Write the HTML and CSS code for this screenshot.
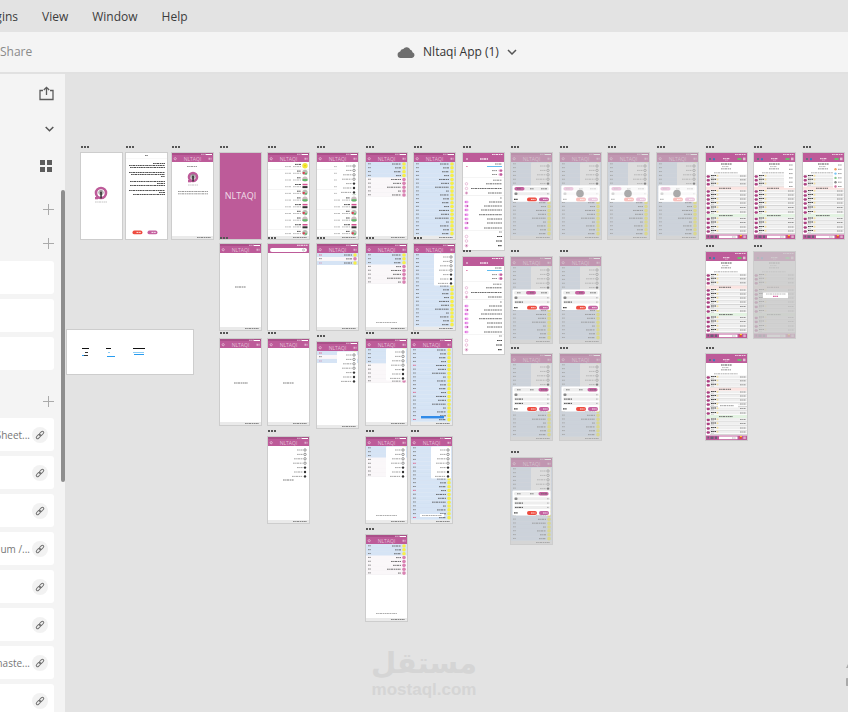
FILE: index.html
```html
<!DOCTYPE html>
<html lang="en">
<head>
    <meta charset="UTF-8">
    <title>Nltaqi App (1)</title>
    <link rel="stylesheet" href="styles.css">
</head>
<body>
<nav class="menubar">
    <button class="cut">Plugins</button>
    <button>View</button>
    <button>Window</button>
    <button>Help</button>
</nav>
<header class="toolbar">
    <a class="share" href="#">Share</a>
    <button class="doc">
        <svg width="18" height="12" viewBox="0 0 18 12"><path d="M3.500 12a3.300 3.300 0 0 1-.3-6.500A3 3 0 0 1 6.300 3 4 4 0 0 1 13.300 3.800 3 3 0 0 1 15.500 6.200 3 3 0 0 1 15 12z" fill="#6e6e6e"/></svg>
        <span>Nltaqi App (1)</span>
        <svg width="10" height="6" viewBox="0 0 10 6"><path d="M1 1l4 4 4-4" fill="none" stroke="#555" stroke-width="1.500"/></svg>
    </button>
</header>
<div class="work">
    <aside class="side">
        <div class="row export"><button aria-label="Export"><svg width="15" height="15" viewBox="0 0 15 15"><path d="M4 4.500H1v9h13v-9h-3M7.500 9V1.500M4.800 4l2.700-2.700L10.200 4" fill="none" stroke="#5c5c5c" stroke-width="1.300"/></svg></button></div>
        <div class="row fold"><button aria-label="Collapse"><svg width="9" height="6" viewBox="0 0 9 6"><path d="M.7 1l3.800 3.800L8.300 1" fill="none" stroke="#555" stroke-width="1.500"/></svg></button></div>
        <div class="row view"><button aria-label="Grid view"><svg width="12" height="12" viewBox="0 0 12 12"><path d="M0 0h5v5H0zM7 0h5v5H7zM0 7h5v5H0zM7 7h5v5H7z" fill="#5c5c5c"/></svg></button></div>
        <div class="row colors"><button class="add" aria-label="Add color"></button></div>
        <div class="row styles"><button class="add" aria-label="Add character style"></button></div>
        <div class="cards">
            <div class="card"></div>
            <div class="card"></div>
            <div class="card"></div>
        </div>
        <div class="row parts"><button class="add" aria-label="Add component"></button></div>
        <div class="cards" id="parts"></div>
        <div class="scroll"></div>
    </aside>
    <main class="canvas" id="canvas">
        <svg class="sheet" width="126" height="44" viewBox="0 0 126 44">
            <path d="M15 18.500h7M39 18.500h5M66 18.500h12" stroke="#111"/>
            <path d="M18 22.500h3M17 25.500h1M18 25.500h3" stroke="#333"/>
            <path d="M41 22.500h2M66 22.500h11" stroke="#8ccdf5"/>
            <path d="M15 25.500h2M40 26.500h8M67 24.500h10" stroke="#289cf0"/>
        </svg>
        <div class="mark">
            <span lang="ar">مستقل</span>
            <b>mostaql.com</b>
        </div>
        <svg class="edge" width="2" height="26" viewBox="0 0 2 26"><path d="M0 6l2-4v4zM2 16a4 4 0 0 0 0 8z" fill="#aaa"/></svg>
    </main>
</div>
<script src="boards.js"></script>
</body>
</html>
```
FILE: styles.css
```css
*{ box-sizing:border-box; }
html,body{ height:100%; }
body{ margin:0; display:flex; flex-direction:column; overflow:hidden; background:#e3e3e3; color:#3c3c3c; font:12px/16px "Open Sans","Noto Sans",sans-serif; }
button{ margin:0; padding:0; border:0; background:none; color:inherit; font:inherit; }
svg{ display:block; }

.menubar{ flex:none; height:32px; padding-top:2px; display:flex; align-items:center; gap:24px; }
.menubar .cut{ width:18px; display:flex; justify-content:flex-end; overflow:hidden; }
.toolbar{ flex:none; height:42px; display:grid; grid-template-columns:1fr auto 1fr; align-items:center; background:#f4f4f4; border-bottom:2px solid #e1e1e1; }
.share{ color:#8a8a8a; text-decoration:none; }
.doc{ grid-column:2; display:flex; align-items:center; gap:8px; margin-left:66px; color:#333; }

.work{ flex:1; min-height:0; display:flex; }
.side{ flex:none; width:65px; position:relative; overflow:hidden; background:#f4f4f4; }
.row{ display:flex; align-items:center; justify-content:flex-end; padding-right:11px; }
.export{ height:38px; }
.fold{ height:34px; }
.view{ height:40px; padding-right:13px; }
.colors{ height:46px; }
.styles{ height:22px; margin-bottom:7px; }
.parts{ height:34px; margin-top:14px; }
.add{ width:11px; height:11px; background:linear-gradient(#aaa,#aaa) center/11px 1px no-repeat,linear-gradient(#aaa,#aaa) center/1px 11px no-repeat; }
.cards{ display:flex; flex-direction:column; gap:5px; width:54px; }
.card{ height:33px; flex:none; display:flex; align-items:center; justify-content:flex-end; gap:2px; padding-right:6px; background:#fff; border-radius:0 3px 3px 0; color:#777; font-size:10px; white-space:nowrap; overflow:hidden; }
.link{ flex:none; width:16px; height:16px; border-radius:50%; background:#f2f2f2; display:flex; align-items:center; justify-content:center; }
.scroll{ position:absolute; right:0; top:116px; width:4px; height:292px; border-radius:2px; background:#8e8e8e; }

.canvas{ flex:1; position:relative; overflow:hidden; background:#e3e3e3; }
.board{ position:absolute; width:41px; }
.board svg{ box-shadow:0 0 0 1px #cdcdcd; background:#fff; }
.board:before{ content:""; position:absolute; left:0; top:-7px; width:8px; height:2px; background:repeating-linear-gradient(90deg,#555 0 2px,transparent 2px 3px); }
.board text{ font-family:"Open Sans","Noto Sans",sans-serif; fill:#fff; text-anchor:middle; }
.sheet{ position:absolute; left:2px; top:256px; background:#fff; box-shadow:0 0 0 1px #cdcdcd; }
.mark{ position:absolute; left:308px; top:572px; width:102px; display:flex; flex-direction:column; align-items:center; color:#d5d5d5; white-space:nowrap; }
.mark span{ font:bold 29px/34px "DejaVu Sans",sans-serif; }
.mark b{ font:bold 17px/20px "Liberation Sans",sans-serif; }
.edge{ position:absolute; right:0; top:588px; }
```
FILE: boards.js
```javascript
var PINK = '#bd5b99', BLUE = '#d6e4f5';

function rect(x, y, w, h, fill, r) {
    return '<rect x="' + x + '" y="' + y + '" width="' + w + '" height="' + h + '" fill="' + fill + '" rx="' + (r || 0) + '"/>';
}
function dot(x, y, r, fill, more) {
    return '<circle cx="' + x + '" cy="' + y + '" r="' + r + '" fill="' + fill + '" ' + (more || '') + '/>';
}
// a line of copy at overview scale
function copy(x1, x2, y, color, w) {
    return '<path d="M' + x1 + ' ' + y + 'H' + x2 + '" stroke="' + (color || '#888') + '" stroke-width="' + (w || 1) + '" stroke-opacity=".85" stroke-dasharray="1.700 .5 1.200 .4 2.300 .6"/>';
}
function ring(x, y, r, color) {
    return dot(x, y, r, 'none', 'stroke="' + color + '" stroke-width=".6"');
}
function title(x, y, size, opacity) {
    return '<text x="' + x + '" y="' + y + '" font-size="' + size + '" fill-opacity="' + opacity + '">NLTAQI</text>';
}

function header() {
    return rect(0, 0, 41, 9, PINK) + rect(0, 0, 41, 2, '#aa5089') + copy(29, 34, 1.3, '#e8cadd') + rect(34, 1, 6, 1, '#fff') +
        ring(3.2, 5.7, 1.1, '#f2dcea') + copy(36.500, 39.500, 5.7, '#e5bfd7', 2) + title(20.500, 7.800, 5, .6);
}
function footer() {
    return rect(0, 83, 41, 3, '#eaeaea') + copy(25, 39, 84.5, '#777');
}
function logo(x, y, r) {
    return dot(x, y, r, '#fff', 'stroke="' + PINK + '" stroke-width="2.600"') + rect(x - r - 1, y + r - 1, 3, 2.3, PINK) +
        ring(x, y - .5, 2.2, '#555') + dot(x, y - .5, 1.300, '#444') + rect(x - .7, y, 1.500, r + .5, '#333') +
        copy(x - r - 1, x + r + 1, y + r + 4, '#aaa', .8);
}
function chats(n, blue, from) {
    var s = '', y, i, b;
    for (i = 0; i < n; i++) {
        y = 9 + i * 3.87;
        b = i < blue;
        s += rect(0, y, 41, 3.87, b ? BLUE : '#faf7f9') + rect(0, y + 3.6, 41, .3, b ? '#c9d8ea' : '#ededed');
        s += dot(38, y + 2, 1.8, b ? '#f6ee4a' : '#d982b2');
        s += copy([26, 29, 28, 30, 25, 27, 21, 32][i % 8], 35, y + 2, '#555');
        s += copy(2, 5, y + 1.8, from && i % 7 == from ? '#e0507a' : '#777');
    }
    return s;
}
function menu() {
    var s = rect(20, 9.500, 20, 32, '#fff', 1), left = [29, 29, 26, 25, 29, 26, 24];
    for (var i = 0; i < 7; i++) {
        s += copy(left[i], 34.5, 13 + i * 4.4, '#888', .9);
        s += i < 4 ? ring(37, 13 + i * 4.4, 1.2, '#555') : dot(37, 13 + i * 4.4, 1.2, '#333');
    }
    return s;
}
function contacts() {
    var s = '', y, flags = 'yrgkrgkrgkr', f;
    for (var i = 0; i < 11; i++) {
        y = 12.700 + i * 6.7;
        f = flags[i];
        if (f == 'y') s += dot(37, y, 2.7, '#f4e73a') + dot(37, y, .8, '#e6c800');
        if (f == 'g') s += dot(37, y, 2.7, '#cdbfc2') + rect(34.3, y, 5.4, 2, '#62bb6a', 1);
        if (f == 'r') s += dot(37, y, 2.7, '#b8c0b6') + rect(34.5, y - .5, 2.5, 2, '#d93c50', 1) + rect(37, y + .5, 2, 1.500, '#67b56b');
        if (f == 'k') s += rect(34.5, y - 2, 5, 1.500, '#d44f90') + rect(34.5, y + .3, 5, 2, '#333');
        s += copy(i % 3 ? 29 : 27, 33, y - 1.3, '#333') + copy(25, 33, y + .9, '#999', .8) + copy(17, 23, y + .9, '#999', .8);
        if (i % 3 == 0) s += rect(0, y + 3.5, 41, .4, '#e6e6e6');
    }
    return s;
}
function settings() {
    var s = rect(0, 0, 41, 9, PINK) + copy(29, 40, 1.500, '#fff') + copy(17, 25, 6, '#fff', 1.5) + dot(4, 6, .8, '#fff');
    s += copy(32, 39, 11, '#666') + copy(3, 5, 13.5, '#d4508e', .8) + rect(24, 13, 15, 1, '#62bdf0');
    [17.6, 21.5].forEach(function (y) {
        s += copy(29, 34, y, '#777') + rect(35.500, y - 1.2, 4, 2.400, '#edaed5', 1.2) + dot(38, y, 1.200, PINK);
    });
    s += copy(30, 39, 27.2, '#777');
    [30.800, 35.5, 40].forEach(function (y, i) {
        s += copy([23, 8, 25][i], 39, y, '#555') + ring(3.500, y, 1.2, '#dd9bc5');
    });
    s += dot(3.500, 40, .7, PINK) + copy(37, 39, 45, '#777');
    [49, 53, 57, 61.7, 66, 70, 75].forEach(function (y, i) {
        s += copy([26, 21, 18, 16, 24, 24, 21][i], 39, y, '#555') + rect(1.5, y - 1.200, 4, 2.400, '#ee9eee', 1.200) + dot(i % 4 == 1 ? 4.500 : 2.600, y, .7, i % 4 == 1 ? '#a04080' : '#d564d0');
    });
    s += copy(36, 39, 79, '#777');
    [83.500, 88, 92.700].forEach(function (y, i) {
        s += copy([34, 33, 35][i], 39, y, '#222', 1.200) + ring(3.500, y, 1.3, '#dd9bc5');
    });
    s += dot(3.500, 92.700, .7, PINK);
    return s + rect(0, 24.5, 41, .4, '#e5e5e5') + rect(0, 42.500, 41, .5, '#e5e5e5') + rect(0, 77, 41, .400, '#e5e5e5');
}
function pill(x, y, fill) {
    return rect(x, y, 10, 3.8, fill, 1.900) + copy(x + 4, x + 8.5, y + 1.900, '#fff', 1);
}
// confirmation dialog: rows is the number of fields, tab the selected segment
function dialog(rows, tab) {
    var h = 12 + rows * 4.3, s = '';
    s += rect(1.500, 32.5, 38, h, '#fff', 1) + rect(3, 34, 35, 3.5, '#eee', 1.5);
    s += rect([3.500, 15, 27.5][tab], 34, 10, 3.6, '#c561a0', 1.800);
    s += copy(6, 10, 35.800, '#666') + copy(19, 23, 35.800, '#666') + copy(30, 36, 35.800, '#666');
    for (var i = 0; i < rows; i++) {
        s += rect(3, 39.3 + i * 4.3, 36, 3, '#eee', 1);
        s += i ? copy(4, 12, 40.800 + i * 4.3, '#333') : rect(3.500, 39.400, 3, 2.600, '#888', 1);
        s += copy(36, 38, 40.800 + i * 4.3, '#888', .7);
    }
    var y = 28.2 + h;
    return s + copy(3, 7, y + 1.8, '#222', 1.3) + pill(16, y, '#ee4c40') + pill(28, y, '#c561a0');
}
function dim() {
    return header() + chats(19, 19) + menu() + footer() + rect(0, 0, 41, 86, 'rgba(196,196,196,.56)');
}
function loading() {
    return dim() + dialog(1, 0) + rect(1.500, 32.500, 38, 16.300, 'rgba(255,255,255,.65)') + dot(20, 40.500, 3.800, '#aaa');
}
function room() {
    var s = rect(0, 0, 41, 9, PINK) + copy(29, 40, 1.500, '#f5dcea') + rect(3, 5, 2, 2, '#62737e') + rect(7, 5.2, 2, 2, '#397dbc');
    s += copy(17, 24, 5.7, '#fff') + copy(19, 22, 7.2, '#e7bdd6', .7) + rect(31.5, 5, 4, 2, '#6bc16e') + rect(37, 4.600, 2.500, 2.600, '#e4bfd5');
    s += copy(15, 26, 11, '#333') + copy(16, 23, 13.600, '#999', .8) + copy(15, 25, 15.800, '#aaa', 1.500) + copy(8, 32, 19.800, '#888', .8);
    [23, 26.800, 30.8, 38, 42, 46, 50, 54.5, 59, 65.500, 69.5, 74, 78].forEach(function (y) {
        s += rect(0, y - 1.500, 41, 2.800, '#efefef') + rect(1, y - .7, 2.500, 2.400, '#ac3f80') + rect(.5, y, 3.5, .8, '#ac3f80');
        s += copy(5, 10, y - .5, '#222') + copy(5, 8, y + 1.3, '#aaa', .7) + dot(11.5, y - .2, 1, '#f2dfa0');
        s += copy(34, 39.500, y, '#777', .9) + rect(4, y + 2, 37, .7, '#c5c5c5');
    });
    s += rect(0, 33.700, 41, 3, '#fbe4e1') + copy(13, 25, 35.300, '#555') + rect(0, 61, 41, 3, '#e3f3e2') + copy(13, 27, 62.6, '#555');
    s += rect(0, 81.500, 41, 4.500, PINK) + rect(13, 82.500, 18.500, 2.700, '#fff') + copy(26, 30, 84, '#999', .8);
    s += rect(1.500, 82.500, 1.500, 2, '#6c6178') + rect(4.500, 82.500, 3, 2.500, '#6c6178') + rect(9, 82.500, 2, 2.500, '#6c6178');
    return s + rect(33.5, 82.400, 2.200, 2.500, '#e84938') + rect(34, 82, 2, 1, '#f4cf35') + rect(37.3, 82.500, 2.500, 2.500, '#dfafcc');
}
function popup(color) {
    var s = rect(30, 9, 11, 26, '#fff'), tint = ['#fff', '#f0a060', '#78c5f5', '#8ac78e', '#888', '#d070a0'];
    for (var i = 0; i < 6; i++) {
        s += copy(35, 39, 12 + i * 4.3, '#888');
        if (color) s += dot(32.500, 12 + i * 4.3, 1.200, tint[i]);
    }
    return s;
}
function paragraphs() {
    var s = copy(19, 22, 2.500, '#666') + rect(0, 5.500, 41, .4, '#eee');
    [[27, 10.5], [3, 12.500], [4, 14.5], [3, 19.500], [5, 21.5], [35, 23.500], [4, 28.500], [31, 30.500], [4, 32.500], [3, 37.500], [33, 39.500], [7, 41.5]].forEach(function (l) {
        s += copy(l[0], 39, l[1], '#333', 1.100);
    });
    return s + pill(6.5, 77.500, '#ee4c40') + pill(21.500, 77.500, '#c561a0');
}

var empty = header() + footer();
var hint = copy(10, 31, 78.5, '#888', .8);
var full = header() + chats(19, 19) + footer();
var notice = copy(15, 26, 43, '#666');
var few = header() + chats(3, 0) + rect(0, 9, 41, 4, BLUE) + rect(0, 17, 41, 4, BLUE) + dot(38, 11, 1.7, '#f6ee4a') + dot(38, 19, 1.700, '#f6ee4a') +
    copy(27, 35, 11, '#555') + copy(27, 35, 19, '#555') + copy(2, 5, 11, '#e0507a') + copy(2, 5, 19, '#d090b0');

// x, y, drawing, height when it is not a plain phone screen
var boards = [
    [16, 79, logo(20, 40, 5)],
    [61, 79, paragraphs()],
    [107, 79, empty + copy(15, 25, 13.5) + logo(21, 24, 4) + copy(6, 36, 38.500) + copy(6, 36, 40.800)],
    [155, 79, rect(0, 0, 41, 86, PINK) + title(20.500, 46, 9, .8)],
    [203, 79, header() + contacts() + footer()],
    [252, 79, header() + contacts() + menu() + footer()],
    [301, 79, header() + chats(9, 4) + footer()],
    [349, 79, full],
    [398, 79, settings(), 97],
    [446, 79, dim() + dialog(1, 0)],
    [495, 79, loading()],
    [543, 79, loading()],
    [592, 79, loading()],
    [641, 79, room()],
    [689, 79, room() + popup(false)],
    [738, 79, room() + popup(true)],

    [155, 170, empty + notice],
    [203, 170, rect(0, 0, 41, 9, PINK) + copy(29, 40, 1.300, '#fff') + rect(2, 4, 37, 4, '#fff', 2) + ring(35.500, 6, 1, '#999')],
    [252, 170, few + footer()],
    [301, 170, header() + chats(8, 3, 7) + hint + footer()],
    [349, 170, full + menu()],
    [398, 183, settings(), 97],
    [446, 183, dim() + dialog(2, 1)],
    [495, 183, dim() + dialog(2, 1)],
    [641, 178, room()],
    [689, 178, room() + rect(0, 0, 41, 86, 'rgba(200,200,200,.8)') + rect(9, 40.500, 25, 5.500, '#fff', .5) + copy(12, 32, 42, '#888', .7) + copy(19, 24, 44.300, '#d04991', 1.300)],

    [155, 265, empty + copy(14, 28, 44, '#666')],
    [203, 265, empty + copy(15, 26, 44, '#666')],
    [252, 268, few + menu() + footer()],
    [301, 265, header() + chats(9, 4) + menu() + footer()],
    [346, 265, header() + chats(19, 19, 4) + footer() + rect(10, 77, 23, 2.400, '#318be8')],
    [446, 280, dim() + dialog(3, 2)],
    [495, 280, dim() + dialog(3, 2)],
    [641, 280, room() + rect(12, 50, 20, 3.500, '#fff') + copy(14, 28, 51.700)],

    [203, 363, empty + menu() + notice],
    [301, 363, header() + chats(8, 3, 7) + menu() + hint + footer()],
    [346, 363, header() + chats(19, 19, 4) + menu() + footer() + rect(9, 77, 24, 3, '#fff') + copy(11, 31, 78.5, '#888', .8)],
    [446, 384, dim() + dialog(3, 2)],

    [301, 461, header() + chats(8, 3) + hint + footer()]
];

boards.forEach(function (b) {
    var h = b[3] || 86, el = document.createElement('div');
    el.className = 'board';
    el.style.left = b[0] + 'px';
    el.style.top = b[1] + 'px';
    el.innerHTML = '<svg width="41" height="' + h + '" viewBox="0 0 41 ' + h + '">' + b[2] + '</svg>';
    document.getElementById('canvas').appendChild(el);
});

var chain = '<button class="link" aria-label="Linked component"><svg width="10" height="10" viewBox="0 0 10 10" fill="none" stroke="#707070"><rect x="-2.600" y="-1.300" width="5.200" height="2.600" rx="1.300" transform="translate(6.500 3.500) rotate(-45)"/><rect x="-2.600" y="-1.300" width="5.200" height="2.600" rx="1.300" transform="translate(3.500 6.500) rotate(-45)"/></svg></button>';
['Sheet...', '', '', 'um /...', '', '', 'maste...', ''].forEach(function (name) {
    document.getElementById('parts').innerHTML += '<div class="card"><span>' + name + '</span>' + chain + '</div>';
});
```
